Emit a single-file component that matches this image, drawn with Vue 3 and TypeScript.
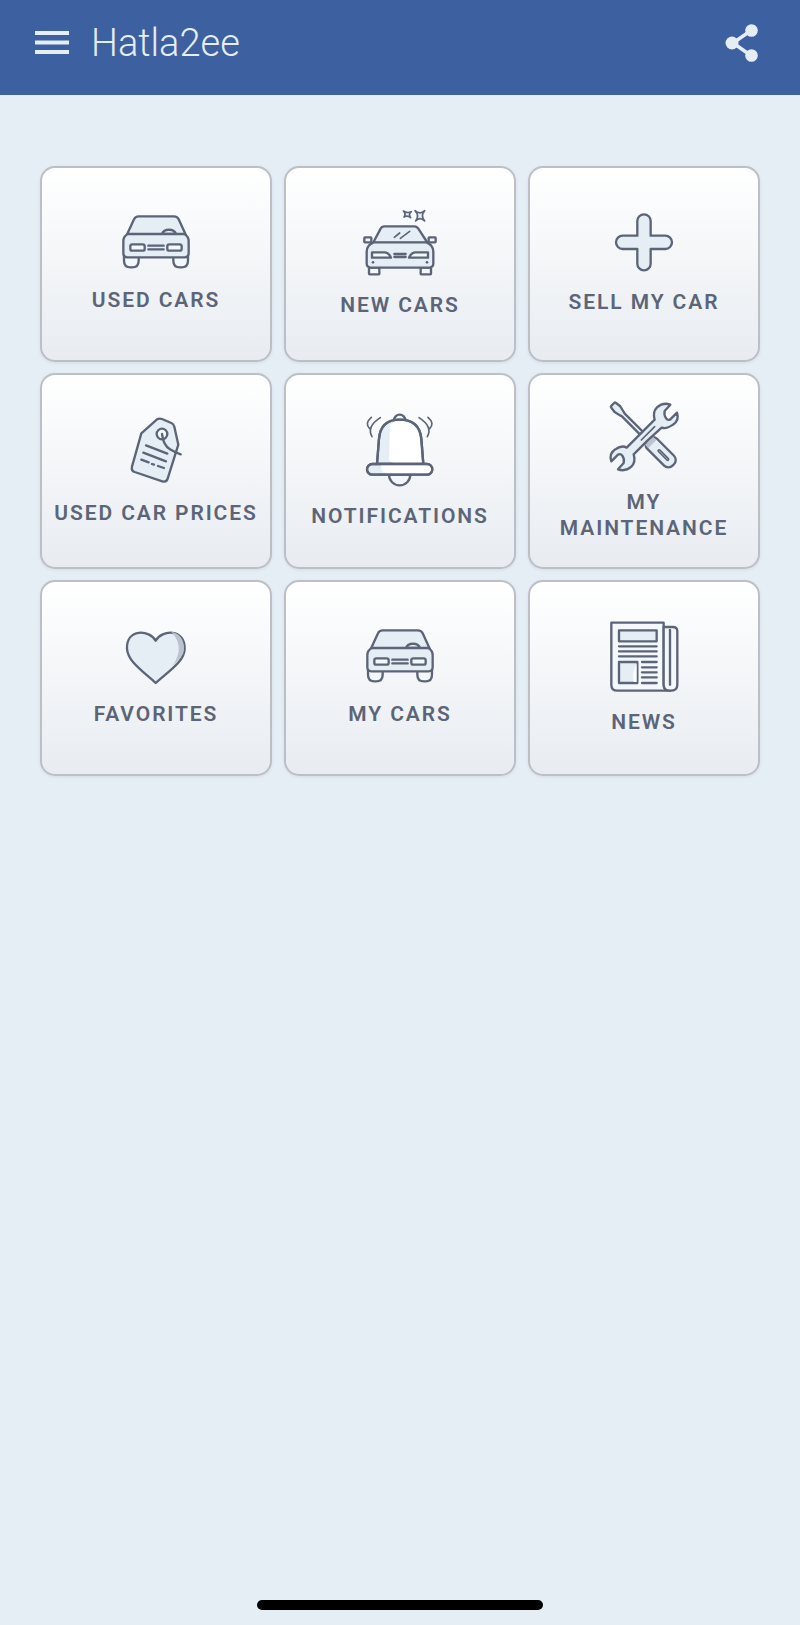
<template>
  <div class="page">
    <header class="topbar">
      <svg class="menu-icon" width="34" height="23" viewBox="0 0 34 23">
        <rect y="0" width="34" height="4" />
        <rect y="9.5" width="34" height="4" />
        <rect y="19" width="34" height="4" />
      </svg>
      <span class="title">Hatla2ee</span>
      <svg class="share-icon" width="34" height="38" viewBox="0 0 34 38">
        <path class="share-line" d="M26 6.5 L8 19 L26 31.5" />
        <circle cx="26.5" cy="6.5" r="6.3" />
        <circle cx="7" cy="19" r="6.5" />
        <circle cx="26.5" cy="31.5" r="6.3" />
      </svg>
    </header>

    <main class="grid">
      <a v-for="item in items" :key="item.label" class="tile">
        <svg
          class="ico"
          :width="item.box[2] / 3"
          :height="item.box[3] / 3"
          :viewBox="item.box.join(' ')"
        >
          <g v-if="item.icon === 'car'">
            <path d="M290 244 L312 196 Q316 187 326 187 L432 187 Q442 187 446 196 L468 244 Z" />
            <path class="white" d="M396 240 A22 18 0 0 1 438 240 Z" />
            <path d="M282 308 V320 Q282 340 302 340 H306 Q326 340 326 320 V308 Z" class="white" />
            <path d="M430 308 V320 Q430 340 450 340 H454 Q474 340 474 320 V308 Z" class="white" />
            <path d="M280 262 Q280 246 294 240 L462 240 Q476 246 476 262 L476 298 Q476 310 464 310 L292 310 Q280 310 280 298 Z" />
            <rect x="301" y="271" width="43" height="19" rx="6" class="white" />
            <rect x="412" y="271" width="43" height="19" rx="6" class="white" />
            <path d="M355 275 H401 M355 286 H401" />
          </g>

          <g v-else-if="item.icon === 'newcar'">
            <path class="thin" d="M369 168 Q381 176 393 170 Q383 178 391 188 Q380 180 371 186 Q378 177 369 168 Z" />
            <path class="thin" d="M404 167 Q419 180 433 167 Q420 182 433 198 Q419 184 406 198 Q418 182 404 167 Z" />
            <path d="M278 264 L301 221 Q304 214 312 214 L402 214 Q410 214 414 221 L442 264 Z" />
            <path class="thin" d="M342 247 L358 234 M360 250 L388 229" />
            <rect x="252" y="247" width="21" height="15" rx="2" class="white" />
            <rect x="445" y="247" width="21" height="15" rx="2" class="white" />
            <rect x="266" y="338" width="31" height="20" rx="2" class="white" />
            <rect x="421" y="338" width="31" height="20" rx="2" class="white" />
            <path d="M259 290 Q259 270 280 262 L438 262 Q459 270 459 290 L459 325 Q459 338 446 338 L272 338 Q259 338 259 325 Z" />
            <path class="white" d="M275 292 L314 292 Q326 294 332 308 L275 308 Z" />
            <path class="white" d="M443 292 L404 292 Q392 294 386 308 L443 308 Z" />
            <path d="M342 297 H376 M342 306 H376" />
            <circle class="dot" cx="278" cy="322" r="4" />
            <circle class="dot" cx="440" cy="322" r="4" />
          </g>

          <path
            v-else-if="item.icon === 'plus'"
            d="M333 197 A20 20 0 0 1 373 197 V241 H417 A20 20 0 0 1 417 281 H373 V325 A20 20 0 0 1 333 325 V281 H289 A20 20 0 0 1 289 241 H333 Z"
          />

          <g v-else-if="item.icon === 'tag'">
            <path d="M381 162 Q388 158 396 161 L424 173 Q431 176 433 184 L445 238 L413 340 Q409 352 397 348 L314 320 Q303 316 306 304 L334 204 Z" />
            <circle class="white" cx="396" cy="206" r="16" />
            <path class="plain" d="M396 206 Q400 240 420 252 Q436 262 452 267" />
            <path class="plain" d="M348 240 L412 265 M340 262 L408 288 M334 283 L356 291 M366 296 L372 298 M384 302 L402 308" />
          </g>

          <g v-else-if="item.icon === 'bell'">
            <path class="white" d="M345 167 A17 17 0 0 1 379 167 Z" />
            <path d="M294 298 L300 222 Q305 165 362 165 Q421 165 427 222 L433 298 Z" />
            <path class="fill-white" d="M330 280 L333 180 Q345 171 362 170 Q418 172 422 225 L427 294 L345 294 Q330 294 330 280 Z" />
            <path class="outline" d="M294 298 L300 222 Q305 165 362 165 Q421 165 427 222 L433 298" />
            <path d="M330 330 A32 32 0 0 0 394 330 Z" class="white" />
            <rect x="264" y="298" width="196" height="32" rx="16" />
            <path class="fill-white" d="M306 302 H444 Q456 302 456 314 Q456 326 444 326 H320 Q306 326 306 302 Z" />
            <rect class="outline" x="264" y="298" width="196" height="32" rx="16" />
            <path class="plain thin" d="M279 216 Q262 186 304 159 M272 192 Q256 176 277 158 M445 216 Q462 186 420 159 M452 192 Q468 176 447 158" />
          </g>

          <g v-else-if="item.icon === 'tools'">
            <g transform="translate(262 120) rotate(45)">
              <path d="M-4 -6 Q-4 -10 0 -10 L16 -12 Q34 -8 40 -6 L150 -6 L150 6 L40 6 Q34 8 16 12 L0 10 Q-4 10 -4 6 Z" />
              <rect x="146" y="-21" width="107" height="42" rx="18" />
              <rect class="shade" x="150" y="-17" width="14" height="34" />
              <rect class="thin" x="190" y="-3" width="42" height="6" rx="3" />
            </g>
            <path d="M343 205 L385 163 Q378 140 392 126 Q410 110 432 118 L415 137 Q412 150 420 160 Q424 166 432 162 L452 142 Q460 165 440 178 Q420 192 406 187 L364 225 L322 267 Q329 290 315 304 Q297 320 275 312 L292 293 Q295 280 287 270 Q283 264 275 268 L255 288 Q247 265 267 252 Q287 238 301 247 Z" />
            <path class="plain thin" d="M345 224 L385 184" />
          </g>

          <g v-else-if="item.icon === 'heart'">
            <path d="M378 198 C360 165 290 160 292 222 C294 260 340 290 378 325 C416 290 465 260 465 222 C466 160 396 165 378 198 Z" />
            <path class="shade" d="M425 172 C452 176 464 198 463 224 C462 244 445 258 428 274 C446 250 462 210 425 172 Z" />
          </g>

          <g v-else-if="item.icon === 'news'">
            <path class="white" d="M412 144 H255 V330 Q255 348 273 348 H432 Q412 348 412 330 Z" />
            <path d="M412 157 H440 Q453 157 453 170 V330 Q453 348 432 348 Q412 348 412 330 Z" class="white" />
            <path class="plain" d="M431 166 V330" />
            <rect x="278" y="167" width="113" height="33" />
            <path class="plain" d="M278 215 H391 M278 230 H391 M278 245 H391" />
            <rect x="278" y="262" width="55" height="63" />
            <path class="fill-white" d="M331 265 V322 L322 322 Q316 295 331 265 Z" />
            <path class="plain" d="M347 262 H391 M347 278 H391 M347 293 H391 M347 308 H391 M347 325 H391" />
          </g>
        </svg>
        <span class="label">{{ item.label }}</span>
      </a>
    </main>

    <div class="home-bar"></div>
  </div>
</template>

<script setup lang="ts">
interface ITile {
  label: string;
  icon: string;
  box: number[];
}

// box is the viewBox, shown at a third of its size
const items: ITile[] = [
  { label: 'USED CARS', icon: 'car', box: [276, 183, 204, 163] },
  { label: 'NEW CARS', icon: 'newcar', box: [248, 165, 222, 197] },
  { label: 'SELL MY CAR', icon: 'plus', box: [266, 173, 176, 176] },
  { label: 'USED CAR PRICES', icon: 'tag', box: [300, 155, 156, 198] },
  { label: 'NOTIFICATIONS', icon: 'bell', box: [258, 145, 208, 220] },
  { label: 'MY MAINTENANCE', icon: 'tools', box: [248, 110, 212, 210] },
  { label: 'FAVORITES', icon: 'heart', box: [286, 163, 184, 166] },
  { label: 'MY CARS', icon: 'car', box: [276, 183, 204, 163] },
  { label: 'NEWS', icon: 'news', box: [251, 139, 206, 214] }
];
</script>

<style>
html,
body {
  margin: 0;
  background: #e5edf5;
}
</style>

<style scoped>
.page {
  display: flex;
  flex-direction: column;
  min-height: 1625px;
  background: #e5edf5;
  font-family: Roboto, "Liberation Sans", sans-serif;
}

.topbar {
  display: flex;
  align-items: center;
  box-sizing: border-box;
  height: 95px;
  padding: 0 41px 10px 35px;
  background: #3d60a0;
  color: #e5edf5;
}
.menu-icon {
  fill: #e5edf5;
  margin-right: 22px;
}
.title {
  font-size: 38px;
  font-weight: 300;
  line-height: 44px;
}
.share-icon {
  margin-left: auto;
  fill: #e5edf5;
}
.share-line {
  fill: none;
  stroke: #e5edf5;
  stroke-width: 3.5;
}

.grid {
  display: grid;
  grid-template-columns: repeat(3, 1fr);
  grid-auto-rows: 196px;
  column-gap: 12px;
  row-gap: 11px;
  padding: 71px 40px 0;
}
.tile {
  display: flex;
  flex-direction: column;
  align-items: center;
  justify-content: center;
  box-sizing: border-box;
  padding: 0 12px;
  border: 2px solid #bcbfc3;
  border-radius: 15px;
  background: linear-gradient(#ffffff, #e8ecf1);
  box-shadow: 0 1px 3px rgba(90, 110, 140, 0.12);
}
.label {
  margin-top: 17px;
  font-size: 21px;
  font-weight: 600;
  line-height: 26px;
  letter-spacing: 1.9px;
  text-align: center;
  color: #5c6577;
}

.ico {
  display: block;
  overflow: visible;
  fill: #e5edf5;
  stroke: #5c6577;
  stroke-width: 7;
  stroke-linejoin: round;
  stroke-linecap: round;
}
.white {
  fill: #f4f7fb;
}
.fill-white {
  fill: #ffffff;
  stroke: none;
}
.outline,
.plain {
  fill: none;
}
.thin {
  stroke-width: 5;
}
.dot {
  fill: #5c6577;
  stroke: none;
}
.shade {
  fill: #bcc3cf;
  stroke: none;
}

.home-bar {
  align-self: center;
  width: 286px;
  height: 10px;
  margin-top: auto;
  margin-bottom: 15px;
  border-radius: 5px;
  background: #000000;
}
</style>
